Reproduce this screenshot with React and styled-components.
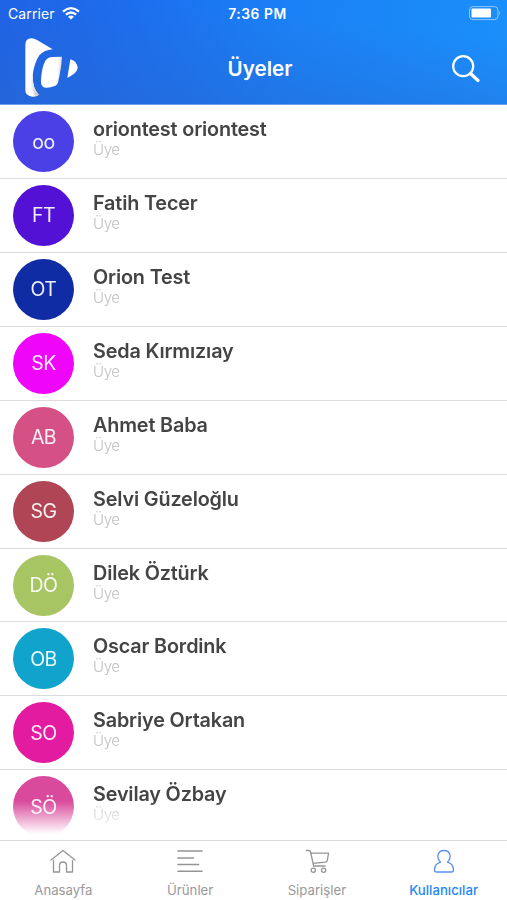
import React from 'react';
import styled, { createGlobalStyle } from 'styled-components';

const GlobalStyle = createGlobalStyle`
  * {
    box-sizing: border-box;
  }

  body {
    margin: 0;
    background: #fff;
    font-family: Inter, 'Liberation Sans', sans-serif;
    overflow: hidden;
  }
`;

const Screen = styled.div`
  display: flex;
  flex-direction: column;
  width: 507px;
  height: 900px;
  background: #fff;
  overflow: hidden;
`;

const Header = styled.header`
  flex: none;
  height: 105px;
  border-bottom: 1px solid #6c9fe6;
  color: #fff;
  background:
    linear-gradient(187deg, rgba(40, 102, 208, 0) 25%, rgba(40, 102, 208, 0.6) 100%),
    linear-gradient(97deg, #1f62e8 0%, #1c70f0 28%, #1a82f6 58%, #1b8ffa 100%);
`;

const StatusBar = styled.div`
  display: grid;
  grid-template-columns: 1fr auto 1fr;
  align-items: center;
  height: 27px;
  padding: 0 6px 0 8px;
  font-size: 14px;
`;

const Carrier = styled.div`
  display: flex;
  align-items: center;
  gap: 7px;
  letter-spacing: 0.1px;
`;

const Time = styled.div`
  padding-left: 6px;
  font-weight: 600;
  font-size: 13.8px;
  letter-spacing: 0.55px;
`;

const BatteryIcon = styled.svg`
  justify-self: end;
  margin-top: -1px;
`;

const TitleBar = styled.div`
  display: grid;
  grid-template-columns: 1fr auto 1fr;
  height: 77px;
  padding: 0 26px 0 25px;
`;

const LogoIcon = styled.svg`
  margin-top: 11px;
`;

const Title = styled.h1`
  margin: 0;
  padding-left: 14px;
  font-size: 20.6px;
  font-weight: 600;
  line-height: 84px;
`;

const SearchIcon = styled.svg`
  justify-self: end;
  margin-top: 27px;
`;

const MemberList = styled.ul`
  flex: 1;
  min-height: 0;
  margin: 0;
  padding: 0;
  list-style: none;
  overflow: hidden;
  mask-image: linear-gradient(to bottom, #000 696px, transparent 729px);
`;

const MemberRow = styled.li`
  display: flex;
  height: 73.93px;
  padding: 6px 13px 0;
  border-bottom: 1px solid #dcdcdc;
`;

const Avatar = styled.div`
  display: flex;
  align-items: center;
  justify-content: center;
  flex: none;
  width: 61px;
  height: 61px;
  border-radius: 50%;
  background: ${({ $color }) => $color};
  color: rgba(255, 255, 255, 0.92);
  font-size: 19.5px;
  letter-spacing: -0.5px;
`;

const MemberInfo = styled.div`
  padding: 6px 0 0 19px;
`;

const MemberName = styled.div`
  color: #444;
  font-size: 19.8px;
  font-weight: 600;
  letter-spacing: -0.15px;
  line-height: 24px;
  white-space: nowrap;
`;

const MemberRole = styled.div`
  color: #c2c2c2;
  font-size: 15px;
  font-weight: 300;
  letter-spacing: -0.4px;
  line-height: 18px;
`;

const TabBar = styled.nav`
  display: grid;
  grid-template-columns: repeat(4, 1fr);
  flex: none;
  height: 60px;
  border-top: 1px solid #dadada;
`;

const Tab = styled.div`
  display: flex;
  flex-direction: column;
  align-items: center;
  padding-top: 7px;
  color: ${({ $active }) => ($active ? '#2387f7' : '#999')};
  font-size: 13.2px;
  font-weight: ${({ $active }) => ($active ? 500 : 400)};
  line-height: 16px;
`;

const TabIcon = styled.svg`
  margin-bottom: 7px;
  fill: none;
  stroke: ${({ $active }) => ($active ? '#5d8ff0' : '#959595')};
  stroke-width: 1.3;
  stroke-linecap: round;
  stroke-linejoin: round;
`;

const members = [
  { initials: 'oo', name: 'oriontest oriontest', color: '#4b40e6' },
  { initials: 'FT', name: 'Fatih Tecer', color: '#5311d6' },
  { initials: 'OT', name: 'Orion Test', color: '#102ca5' },
  { initials: 'SK', name: 'Seda Kırmızıay', color: '#ee05fa' },
  { initials: 'AB', name: 'Ahmet Baba', color: '#d55084' },
  { initials: 'SG', name: 'Selvi Güzeloğlu', color: '#b04655' },
  { initials: 'DÖ', name: 'Dilek Öztürk', color: '#a8c564' },
  { initials: 'OB', name: 'Oscar Bordink', color: '#10a4cd' },
  { initials: 'SO', name: 'Sabriye Ortakan', color: '#e31ba1' },
  { initials: 'SÖ', name: 'Sevilay Özbay', color: '#d9499c' },
];

const tabs = [
  {
    label: 'Anasayfa',
    icon: <path d="M2 11 L14 1.5 L26 11 M4.5 11.5 V23 H10.5 V16.5 Q10.5 13 14 13 Q17.5 13 17.5 16.5 V23 H23.5 V11.5" />,
  },
  {
    label: 'Ürünler',
    icon: <path d="M2 2 H26 M2 9 H17.5 M2 15.5 H22.5 M2 22.3 H26" strokeWidth="1.6" />,
  },
  {
    label: 'Siparişler',
    icon: (
      <>
        <path d="M3.5 1.5 H5.8 Q7.2 1.5 7.6 3 L10.6 17 H22 M8.2 4.2 H25.6 L24.2 11.6 Q23.9 13 22.4 13.2 L10 14.3" />
        <circle cx="10.3" cy="21.3" r="2.1" />
        <circle cx="20.6" cy="21.3" r="2.1" />
      </>
    ),
  },
  {
    label: 'Kullanıcılar',
    active: true,
    icon: (
      <path d="M10.7 13.2 C6.2 9.5 7 1.5 14 1.5 C21 1.5 21.8 9.5 17.3 13.2 C21.7 14.3 23.5 17.5 23.5 21 Q23.5 23 21.5 23 H6.5 Q4.5 23 4.5 21 C4.5 17.5 6.3 14.3 10.7 13.2 Z" />
    ),
  },
];

const WifiIcon = () => (
  <svg width="18" height="13" viewBox="0 0 18 13" fill="none" stroke="#fff" strokeWidth="2.2">
    <path d="M1 4.6 Q9 -2.2 17 4.6" />
    <path d="M3.9 7.7 Q9 3.3 14.1 7.7" />
    <path d="M9 12.6 L6 9.7 Q9 7.2 12 9.7 Z" fill="#fff" stroke="none" />
  </svg>
);

const Logo = () => (
  <LogoIcon width="54" height="60" viewBox="75 115 162 180">
    <defs>
      <linearGradient id="shade" x1="0" y1="0" x2="1" y2="0">
        <stop offset="0" stopColor="#fff" />
        <stop offset="1" stopColor="#bdb8b6" />
      </linearGradient>
      <linearGradient id="edge" x1="0" y1="0" x2="1" y2="0.1">
        <stop offset="0.8" stopColor="#fff" />
        <stop offset="1" stopColor="#dedad8" />
      </linearGradient>
    </defs>
    <path
      d="M76 136 Q76 117 94 116 Q103 116 111 121 L158 149 Q132 151 118 167 Q102 190 98 228 Q97 267 117 285 Q108 292 96 291 Q76 288 76 272 Z"
      fill="#fff"
    />
    <path d="M98 222 Q90 238 91 258 Q95 278 106 289 Q112 289 117 285 Q97 267 98 222 Z" fill="url(#shade)" />
    <path
      d="M186 171 Q184 206 174 249 Q172 255 166 258 Q150 265 136 264 Q121 262 123 240 Q125 205 136 183 Q143 173 158 172 Z"
      fill="url(#edge)"
    />
    <path d="M211 179 Q230 184 233 203 Q234 219 202 235 Z" fill="#fff" />
  </LogoIcon>
);

const App = () => (
  <Screen>
    <GlobalStyle />
    <Header>
      <StatusBar>
        <Carrier>
          Carrier
          <WifiIcon />
        </Carrier>
        <Time>7:36 PM</Time>
        <BatteryIcon width="32" height="15" viewBox="0 0 32 15">
          <rect x="0.5" y="0.6" width="28.5" height="13" rx="3.5" fill="none" stroke="#fff" strokeOpacity="0.5" />
          <rect x="2.5" y="2.6" width="19.5" height="9" rx="1" fill="#fff" />
          <path d="M30.2 5 Q32 7 30.2 9.2 Z" fill="#fff" fillOpacity="0.55" />
        </BatteryIcon>
      </StatusBar>
      <TitleBar>
        <Logo />
        <Title>Üyeler</Title>
        <SearchIcon width="30" height="29" viewBox="0 0 30 29" fill="none" stroke="#fff">
          <circle cx="12.2" cy="12.2" r="10" strokeWidth="2.2" />
          <path d="M19.5 19.5 L27 26.5" strokeWidth="3.2" strokeLinecap="round" />
        </SearchIcon>
      </TitleBar>
    </Header>
    <MemberList>
      {members.map(({ initials, name, color }) => (
        <MemberRow key={name}>
          <Avatar $color={color}>{initials}</Avatar>
          <MemberInfo>
            <MemberName>{name}</MemberName>
            <MemberRole>Üye</MemberRole>
          </MemberInfo>
        </MemberRow>
      ))}
    </MemberList>
    <TabBar>
      {tabs.map(({ label, icon, active }) => (
        <Tab key={label} $active={active}>
          <TabIcon $active={active} width="28" height="27" viewBox="0 -1 28 27">
            {icon}
          </TabIcon>
          {label}
        </Tab>
      ))}
    </TabBar>
  </Screen>
);

export default App;
